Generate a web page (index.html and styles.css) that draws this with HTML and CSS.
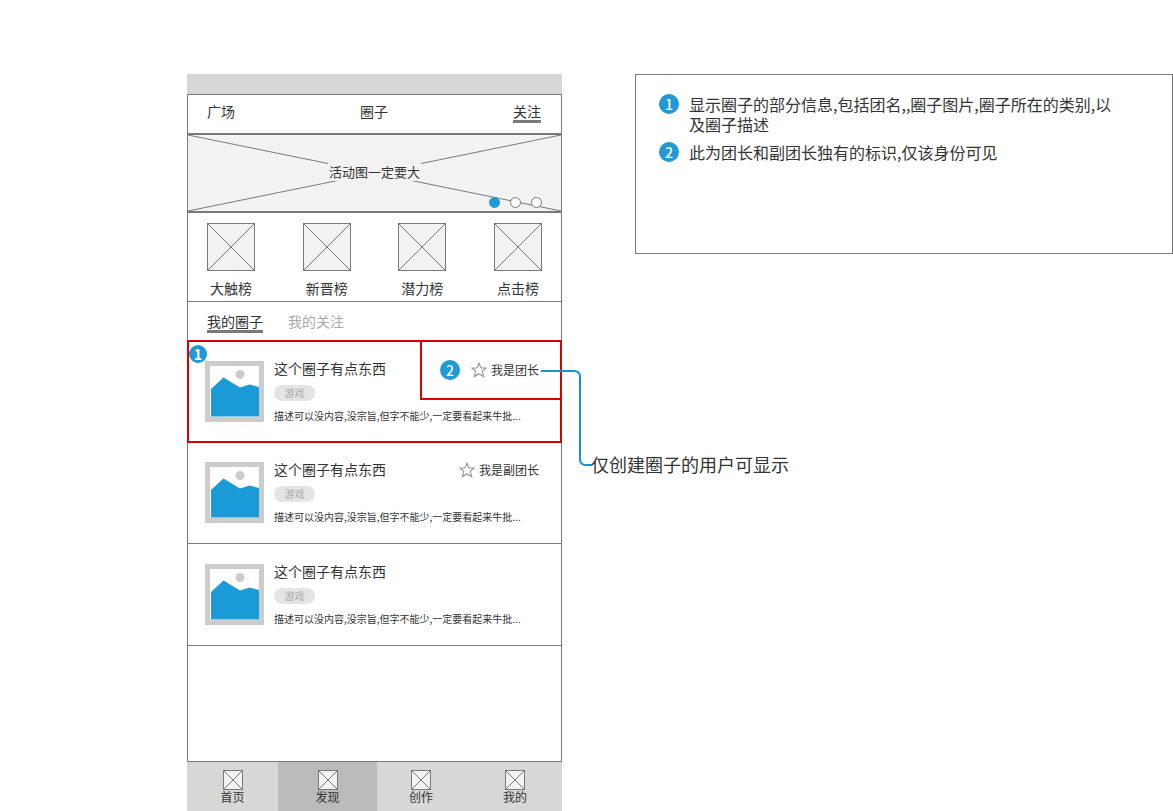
FILE: index.html
```html
<!DOCTYPE html>
<html lang="zh-CN">

<head>
    <meta charset="UTF-8">
    <title>圈子</title>
    <link rel="stylesheet" href="styles.css">
</head>

<body>
    <svg class="defs" width="0" height="0">
        <symbol id="ph" viewBox="0 0 48 48">
            <rect x="0.5" y="0.5" width="47" height="47" fill="#f2f2f2" stroke="#797979"></rect>
            <path d="M0.5 0.5L47.5 47.5M47.5 0.5L0.5 47.5" stroke="#797979" fill="none"></path>
        </symbol>
        <symbol id="ph-small" viewBox="0 0 20 20">
            <rect x="0.5" y="0.5" width="19" height="19" fill="#f2f2f2" stroke="#797979"></rect>
            <path d="M0.5 0.5L19.5 19.5M19.5 0.5L0.5 19.5" stroke="#797979" fill="none"></path>
        </symbol>
        <symbol id="pic" viewBox="0 0 59 61">
            <rect x="2.5" y="2.5" width="54" height="56" fill="#fff" stroke="#ccc" stroke-width="5"></rect>
            <circle cx="35" cy="13.5" r="4.5" fill="#ccc"></circle>
            <path d="M6 28L18.5 16.5L35 26.5L44.5 23.5L54 26V55.5H6Z" fill="#1a9bd7"></path>
        </symbol>
        <symbol id="star" viewBox="0 0 16 16">
            <path d="M8 1.2L10 6H15.2L11.2 9.3L12.6 14.6L8 11.7L3.4 14.6L4.8 9.3L0.8 6H6Z" fill="#fff" stroke="#999" stroke-width="1.2"></path>
        </symbol>
    </svg>

    <div class="canvas">
        <div class="phone">
            <div class="status"></div>
            <div class="screen">
                <div class="top">
                    <span>广场</span>
                    <span class="top-mid">圈子</span>
                    <span class="top-on">关注</span>
                </div>
                <div class="banner">
                    <svg class="banner-x" viewBox="0 0 373 76" preserveAspectRatio="none">
                        <path d="M0 0L373 76M373 0L0 76" stroke="#797979" fill="none"></path>
                    </svg>
                    <span class="banner-text">活动图一定要大</span>
                    <div class="dots">
                        <i class="dot dot-on"></i>
                        <i class="dot"></i>
                        <i class="dot"></i>
                    </div>
                </div>
                <div class="ranks">
                    <div class="rank"><svg class="rank-pic"><use href="#ph"></use></svg><span>大触榜</span></div>
                    <div class="rank"><svg class="rank-pic"><use href="#ph"></use></svg><span>新晋榜</span></div>
                    <div class="rank"><svg class="rank-pic"><use href="#ph"></use></svg><span>潜力榜</span></div>
                    <div class="rank"><svg class="rank-pic"><use href="#ph"></use></svg><span>点击榜</span></div>
                </div>
                <div class="tabs">
                    <span class="tab tab-on">我的圈子</span>
                    <span class="tab">我的关注</span>
                </div>

                <div class="item item-first">
                    <svg class="thumb"><use href="#pic"></use></svg>
                    <div class="info">
                        <div class="title">这个圈子有点东西</div>
                        <span class="tag">游戏</span>
                        <div class="desc">描述可以没内容,没宗旨,但字不能少,一定要看起来牛批...</div>
                    </div>
                    <div class="role"><svg class="star"><use href="#star"></use></svg>我是团长</div>
                    <div class="mark mark-item"></div>
                    <div class="mark mark-role"></div>
                    <b class="badge badge-one">1</b>
                    <b class="badge badge-two">2</b>
                </div>
                <div class="item">
                    <svg class="thumb"><use href="#pic"></use></svg>
                    <div class="info">
                        <div class="title">这个圈子有点东西</div>
                        <span class="tag">游戏</span>
                        <div class="desc">描述可以没内容,没宗旨,但字不能少,一定要看起来牛批...</div>
                    </div>
                    <div class="role role-sub"><svg class="star"><use href="#star"></use></svg>我是副团长</div>
                </div>
                <div class="item">
                    <svg class="thumb"><use href="#pic"></use></svg>
                    <div class="info">
                        <div class="title">这个圈子有点东西</div>
                        <span class="tag">游戏</span>
                        <div class="desc">描述可以没内容,没宗旨,但字不能少,一定要看起来牛批...</div>
                    </div>
                </div>
            </div>
            <div class="nav">
                <div class="nav-cell"><svg class="nav-pic"><use href="#ph-small"></use></svg><span>首页</span></div>
                <div class="nav-cell nav-on"><svg class="nav-pic"><use href="#ph-small"></use></svg><span>发现</span></div>
                <div class="nav-cell"><svg class="nav-pic"><use href="#ph-small"></use></svg><span>创作</span></div>
                <div class="nav-cell nav-last"><svg class="nav-pic"><use href="#ph-small"></use></svg><span>我的</span></div>
            </div>
        </div>

        <div class="note">
            <div class="note-row"><b class="badge">1</b><p>显示圈子的部分信息,包括团名,,圈子图片,圈子所在的类别,以及圈子描述</p></div>
            <div class="note-row"><b class="badge">2</b><p>此为团长和副团长独有的标识,仅该身份可见</p></div>
        </div>

        <svg class="link" width="60" height="100" viewBox="0 0 60 100">
            <path d="M1 1H34Q40 1 40 7V89Q40 95 46 95H52" fill="none" stroke="#1295c7" stroke-width="2"></path>
        </svg>
        <div class="link-text">仅创建圈子的用户可显示</div>
    </div>
</body>

</html>
```

FILE: styles.css
```css
html, body {
    margin: 0;
    height: 100%;
    overflow: hidden;
    background-color: #fff;
}

body {
    font-family: "Noto Sans CJK SC", "Liberation Sans", sans-serif;
    font-size: 14px;
    color: #333;
}

.defs {
    display: block;
    height: 0;
}

/* free canvas, like the wireframe tool */
.canvas {
    position: relative;
    display: flex;
    align-items: flex-start;
    height: 811px;
    padding: 74px 0 0 187px;
    box-sizing: border-box;
}

.phone {
    flex: none;
    width: 375px;
    height: 737px;
    display: flex;
    flex-direction: column;
}

.status {
    height: 20px;
    background-color: #d7d7d7;
}

.screen {
    flex: 1;
    border: 1px solid #797979;
}

.top {
    height: 38px;
    padding: 8px 20px 0 19px;
    box-sizing: border-box;
    display: flex;
    justify-content: space-between;
    align-items: flex-start;
    line-height: 17px;
}

.top-on {
    border-bottom: 3px solid #797979;
}

.banner {
    position: relative;
    height: 76px;
    background-color: #f2f2f2;
    border-top: 2px solid #797979;
    border-bottom: 2px solid #797979;
    display: flex;
    justify-content: center;
    align-items: center;
}

.banner-x {
    position: absolute;
    left: 0;
    top: 0;
    width: 100%;
    height: 100%;
}

.banner-text {
    position: relative;
    font-size: 13px;
    line-height: 18px;
    padding: 0 1px;
    margin-bottom: 2px;
    background-color: #f2f2f2;
}

.dots {
    position: absolute;
    right: 19px;
    bottom: 3px;
    display: flex;
    gap: 10px;
}

.dot {
    width: 9px;
    height: 9px;
    border: 1px solid #797979;
    border-radius: 50%;
    background-color: #fff;
}

.dot-on {
    border-color: #1a9bd7;
    background-color: #1a9bd7;
}

.ranks {
    height: 89px;
    padding: 10px 19px 0;
    box-sizing: border-box;
    border-bottom: 1px solid #797979;
    display: flex;
    justify-content: space-between;
}

.rank {
    width: 48px;
    display: flex;
    flex-direction: column;
    align-items: center;
    white-space: nowrap;
}

.rank-pic {
    width: 48px;
    height: 48px;
    margin-bottom: 7px;
}

.rank span {
    line-height: 20px;
}

.tabs {
    height: 39px;
    padding: 11px 19px 0;
    box-sizing: border-box;
    display: flex;
    align-items: flex-start;
    gap: 25px;
}

.tab {
    color: #aaa;
    font-size: 14px;
    line-height: 16px;
}

.tab-on {
    color: #333;
    padding-bottom: 1px;
    border-bottom: 3px solid #797979;
}

.item {
    position: relative;
    height: 102px;
    padding: 20px 22px 0 17px;
    box-sizing: border-box;
    border-bottom: 1px solid #797979;
    display: flex;
}

.item-first {
    height: 101px;
}

.thumb {
    flex: none;
    width: 59px;
    height: 61px;
    margin-right: 10px;
}

.info {
    flex: 1;
    min-width: 0;
}

.title {
    font-size: 14px;
    line-height: 18px;
    margin-top: -2px;
}

.tag {
    display: block;
    width: 41px;
    height: 16px;
    margin-top: 8px;
    border-radius: 8px;
    background-color: #e4e4e4;
    color: #aaa;
    font-size: 10px;
    line-height: 16px;
    text-align: center;
}

.desc {
    margin-top: 8px;
    font-size: 10px;
    line-height: 14px;
    white-space: nowrap;
}

.role {
    position: absolute;
    right: 22px;
    top: 20px;
    display: flex;
    align-items: center;
    gap: 4px;
    font-size: 12px;
    line-height: 18px;
}

.role-sub {
    top: 19px;
}

.star {
    width: 16px;
    height: 16px;
}

.mark {
    position: absolute;
    border: 2px solid #d90000;
    box-sizing: border-box;
}

.mark-item {
    left: -1px;
    right: -1px;
    top: -1px;
    bottom: -2px;
}

.mark-role {
    right: -1px;
    top: -1px;
    width: 142px;
    height: 60px;
}

.badge {
    flex: none;
    width: 20px;
    height: 20px;
    border-radius: 50%;
    background-color: #1f9ad6;
    color: #fff;
    font-size: 14px;
    font-weight: 500;
    line-height: 20px;
    text-align: center;
}

.badge-one {
    position: absolute;
    left: 1px;
    top: 4px;
    width: 18px;
    height: 18px;
    line-height: 18px;
    font-weight: bold;
}

.badge-two {
    position: absolute;
    left: 252px;
    top: 19px;
}

.nav {
    height: 49px;
    background-color: #d7d7d7;
    display: grid;
    grid-template-columns: 91px 99px 88px 97px;
}

.nav-cell {
    display: flex;
    flex-direction: column;
    align-items: center;
    padding-top: 8px;
    box-sizing: border-box;
    font-size: 12px;
}

.nav-on {
    background-color: #bbb;
}

.nav-last {
    padding-left: 3px;
}

.nav-pic {
    width: 20px;
    height: 20px;
}

.nav-cell span {
    line-height: 14px;
}

.note {
    flex: none;
    width: 538px;
    height: 180px;
    margin-left: 73px;
    padding: 19px 60px 0 23px;
    box-sizing: border-box;
    border: 1px solid #797979;
    font-size: 16px;
}

.note-row {
    display: flex;
    gap: 10px;
    margin-bottom: 8px;
}

.note-row p {
    margin: 0;
    line-height: 20px;
}

.link {
    position: absolute;
    left: 540px;
    top: 370px;
}

.link-text {
    position: absolute;
    left: 591px;
    top: 451px;
    font-size: 18px;
    line-height: 26px;
}
```
